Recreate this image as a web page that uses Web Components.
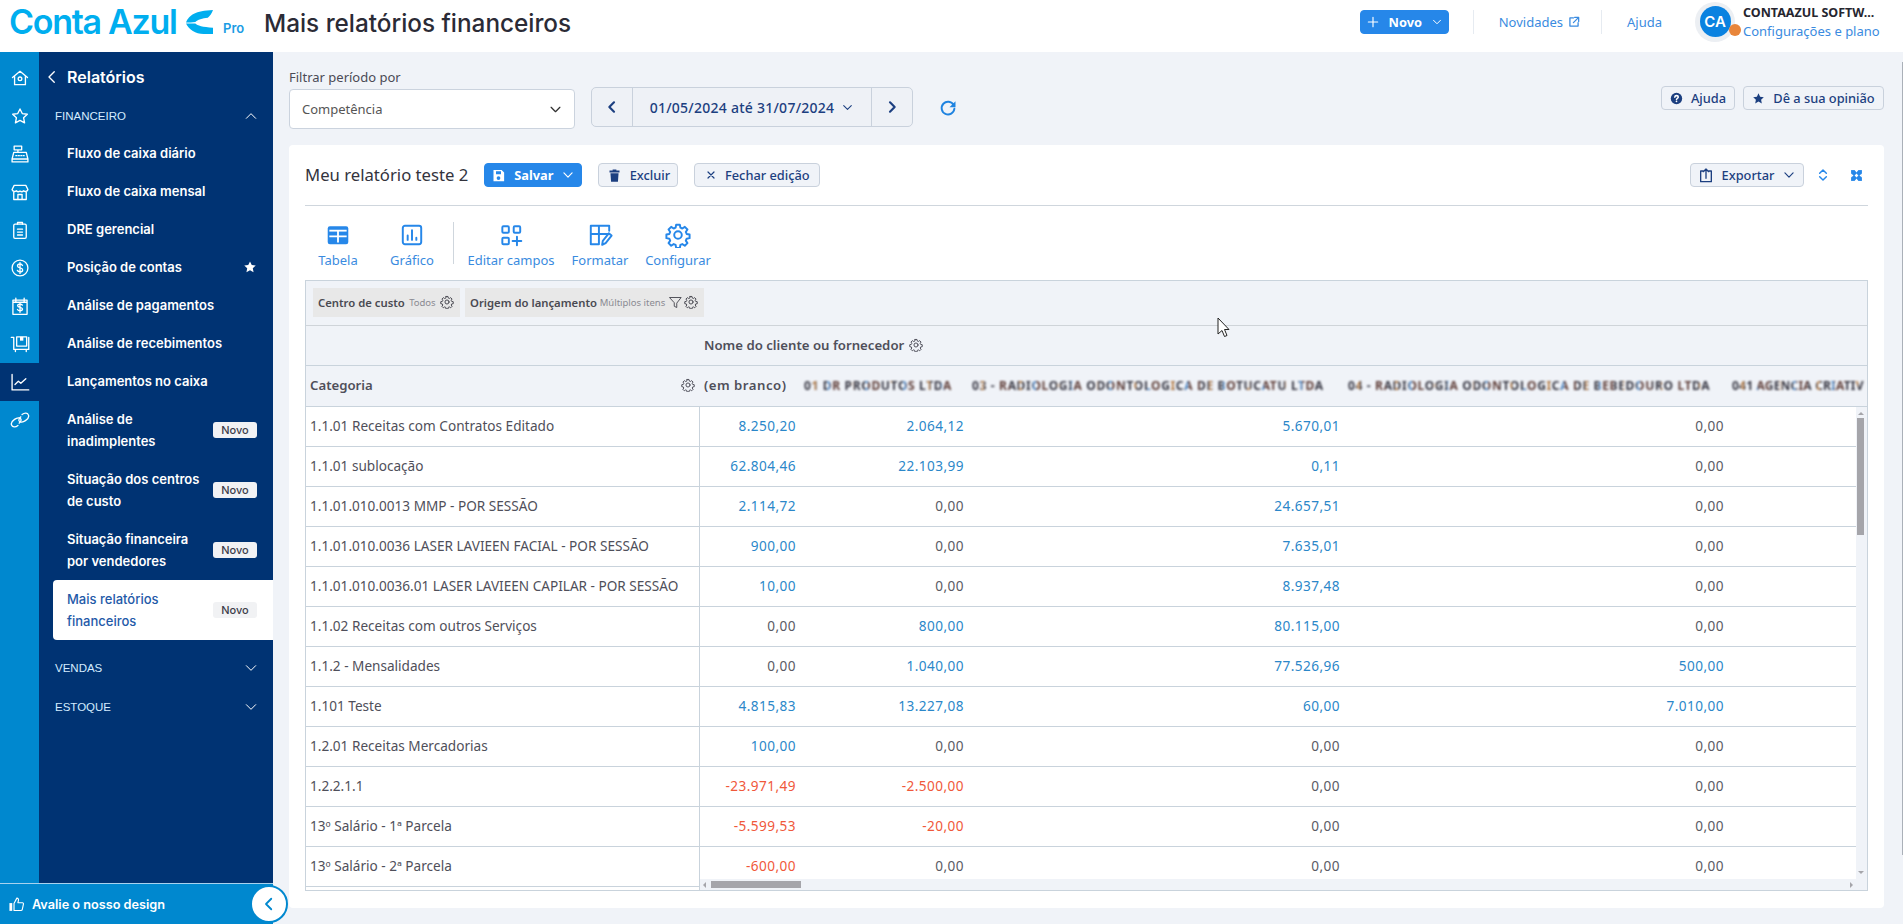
<!DOCTYPE html>
<html lang="pt-BR">
<head>
<meta charset="utf-8">
<title>Mais relatórios financeiros</title>
<style>
    html, body { margin: 0; height: 924px; overflow: hidden; background: #f0f3f8; }
    body { font-family: "Noto Sans", sans-serif; }
</style>
</head>
<body>
<ca-app></ca-app>
<script>
const ICONS = {
    home: '<path d="M3 11.500 12 4l9 7.500M5.500 10v10h13V10"/><circle cx="12" cy="13" r="2.200"/>',
    star: '<path d="m12 3.500 2.700 5.600 6.100.8-4.500 4.200 1.200 6.100-5.500-3-5.500 3 1.200-6.100-4.500-4.200 6.100-.8z"/>',
    register: '<path d="M5 2.500h9v4.500H5zM9.500 7v3M4.500 10h15l2 8h-19zM2.500 18h19v3.500h-19z"/><path d="M7 14h10" stroke-dasharray="1.200 1.800"/>',
    store: '<path d="M5 4h14l2.500 5a3 3 0 0 1-5 1.500A3.500 3.500 0 0 1 12 11a3.500 3.500 0 0 1-4.500-.5A3 3 0 0 1 2.500 9zM4.500 12v9h15v-9M9.500 21v-6h5v6"/>',
    clipboard: '<rect x="4.500" y="5" width="15" height="17" rx="1.500"/><path d="M9 5V3h6v2M9 11h6M9 14.500h6M9 18h6"/>',
    dollar: '<circle cx="12" cy="12" r="9.500"/><path d="M15 9c-.6-1.300-1.700-1.800-3-1.800-1.800 0-3 1-3 2.300 0 3.200 6.200 1.600 6.200 4.800 0 1.400-1.300 2.400-3.200 2.400-1.500 0-2.700-.6-3.200-1.900M12 5.500v13"/>',
    calendar: '<path d="M3.500 5h17v17h-17zM7 2.500V7M17 2.500V7M3.500 7.500h17"/><path d="M14.800 11c-.5-.8-1.500-1.200-2.800-1.200-1.700 0-2.800.8-2.800 1.900 0 2.700 5.800 1.300 5.800 4 0 1.100-1.200 2-3 2-1.400 0-2.500-.5-3-1.500M12 8.500v11"/>',
    box: '<path d="M1.500 4h3v14.500h18V4M8 3.500h12v11H8zM6.500 18.500V21M19.500 18.500V21"/><path fill="currentColor" stroke="none" d="M12 3.500h4v4.500h-4z"/>',
    chart: '<path d="M2.500 3v18.500h20M6 15l4-4 3 2.500 6-5.500"/>',
    link: '<path d="M9.500 18.500c-3 2.500-6.500 2-7.500-.2-1-2 .5-5 3.500-7s6.500-2.500 7.500-.5c.7 1.500-.2 3.500-2 5"/><path d="M14.500 5.500c3-2.500 6.500-2 7.500.2 1 2-.5 5-3.500 7s-6.500 2.500-7.500.5c-.7-1.500.2-3.500 2-5"/>',
    left: '<path d="m15 5-7 7 7 7"/>',
    right: '<path d="m9 5 7 7-7 7"/>',
    up: '<path d="m5 15.500 7-7 7 7"/>',
    down: '<path d="m5 8.500 7 7 7-7"/>',
    plus: '<path d="M12 4v16M4 12h16"/>',
    x: '<path d="m6 6 12 12M18 6 6 18"/>',
    external: '<path d="M11 5H5v14h14v-6M13 4h7v7M20 4l-9 9"/>',
    refresh: '<path d="M19.500 8A8.500 8.500 0 1 0 20.500 13"/><path fill="currentColor" stroke="none" d="M22 3v8h-8z"/>',
    sort: '<path d="m7 9.500 5-5 5 5M7 14.500l5 5 5-5"/>',
    upload: '<path d="M8 6H4v16h16V6h-4M12 17V3M8 7l4-4 4 4"/>',
    thumb: '<path fill="currentColor" stroke="none" d="M2 10h4v11H2z"/><path d="M8.500 10.500 12.500 3c2 .2 2.800 1.700 2.200 3.500L14 9.500h6.500c1 0 1.500 1 1.300 2l-1.600 7.500c-.2 1-1 1.500-2 1.500H8.500z"/>',
    gear: '<path d="M10.300 2.500h3.400l.5 2.700 1.800.8 2.300-1.500 2.400 2.400-1.500 2.300.8 1.800 2.700.5v3.400l-2.700.5-.8 1.800 1.500 2.300-2.400 2.400-2.300-1.500-1.800.8-.5 2.700h-3.400l-.5-2.700-1.800-.8-2.300 1.500-2.400-2.400 1.500-2.300-.8-1.800-2.700-.5v-3.400l2.700-.5.8-1.800-1.500-2.300 2.400-2.400 2.300 1.500 1.800-.8z"/><circle cx="12" cy="12" r="3.500"/>',
    funnel: '<path d="M3 4h18l-7 9v7l-4-2v-5z"/>',
    grid: '<rect x="2.500" y="4" width="19" height="16.500" rx="2" fill="currentColor" stroke="none"/><path stroke="#fff" stroke-width="1.700" stroke-linecap="butt" d="M4 13.300h16M12 8v11"/><path stroke="#fff" stroke-width="1.700" stroke-linecap="butt" d="M4 8h16"/>',
    bars: '<rect x="3.500" y="3.500" width="17" height="17" rx="2"/><path d="M8 16.500v-4M12 16.500V7.500M16 16.500v-2"/>',
    fields: '<rect x="4" y="4" width="6" height="6" rx="1"/><rect x="14.500" y="4" width="6" height="6" rx="1"/><rect x="4" y="14.500" width="6" height="6" rx="1"/><path d="M17.500 13.500v8M13.500 17.500h8"/>',
    format: '<path d="M20.500 8V3.500h-17v17H11M3.500 11h17M11 3.500V20.500"/><path d="m14 21 .6-3.500 5.500-7 2.600 2-5.500 7z"/>',
    star_solid: '<path fill="currentColor" stroke="none" d="m12 2.500 3 6.200 6.800.9-5 4.700 1.300 6.700-6.100-3.300-6.100 3.300 1.300-6.700-5-4.700 6.800-.9z"/>',
    help_solid: '<circle cx="12" cy="12" r="10.500" fill="currentColor" stroke="none"/><path stroke="#fff" stroke-width="2.800" d="M8.800 9.500c.2-1.800 1.500-2.800 3.300-2.800 1.900 0 3.200 1 3.200 2.600 0 2.400-3.300 2.400-3.300 4.700"/><circle cx="12" cy="17.300" r="1.600" fill="#fff" stroke="none"/>',
    trash_solid: '<path fill="currentColor" stroke="none" d="M4 4h5V2.500h6V4h5v3H4zM5.500 8.500h13l-1 13.500h-11z"/>',
    save_solid: '<path fill="currentColor" stroke="none" fill-rule="evenodd" d="M4 3h13l4 4v14H4zM8 5v5h8V5zM12 13a3 3 0 1 0 0 6 3 3 0 0 0 0-6z"/>',
    expand_solid: '<path fill="currentColor" stroke="none" d="M2 2h20v20H2z"/><path fill="#fff" stroke="none" d="M8.500 2h7L12 6.500zM8.500 22h7L12 17.500zM2 8.500v7L6.500 12zM22 8.500v7L17.500 12zM12 8.500 15.500 12 12 15.500 8.500 12z"/>'
};

class CaIcon extends HTMLElement {
    connectedCallback() {
        const size = this.getAttribute('size') || 16;
        const weight = this.getAttribute('weight') || 1.8;
        this.attachShadow({mode: 'open'}).innerHTML = `
        <style>
            :host { display: inline-flex; flex: none; width: ${size}px; height: ${size}px; }
            svg { width: 100%; height: 100%; display: block; fill: none; stroke: currentColor;
                  stroke-width: ${weight}; stroke-linecap: round; stroke-linejoin: round; }
        </style>
        <svg viewBox="0 0 24 24">${ICONS[this.getAttribute('name')] || ''}</svg>`;
    }
}
customElements.define('ca-icon', CaIcon);

class CaButton extends HTMLElement {
    constructor() {
        super();
        this.attachShadow({mode: 'open'}).innerHTML = `
        <style>
            :host { display: inline-flex; align-items: center; justify-content: center; gap: 8px; flex: none;
                    box-sizing: border-box; height: 24px; padding: 0 8px; border-radius: 4px;
                    border: 1px solid #c9d1dc; background: #f0f3f8; color: #1c3f80;
                    font: 500 12.8px "Noto Sans", sans-serif; white-space: nowrap; }
            :host([primary]) { background: #2687e9; border-color: #2687e9; color: #fff; font-weight: 700; }
        </style>
        <slot></slot>`;
    }
}
customElements.define('ca-button', CaButton);

class CaHeader extends HTMLElement {
    constructor() {
        super();
        this.attachShadow({mode: 'open'}).innerHTML = `
        <style>
            :host { display: flex; align-items: center; height: 52px; background: #fff; flex: none; padding: 0 0 9px 9px; box-sizing: border-box; }
            .logo { font: 600 34px/1 Inter, sans-serif; letter-spacing: -1.300px; color: #00aeef; width: 172px; white-space: nowrap; }
            .mark { width: 27px; height: 24px; margin: 0 0 0 5px; flex: none; }
            .pro { font: 600 13px/1 Inter, sans-serif; color: #1b9ce4; align-self: flex-end; margin: 0 0 8px 10px; width: 41px; }
            h1 { margin: 3px 0 0; font: 500 24.300px/1 Inter, sans-serif; color: #2b2b36; white-space: nowrap; }
            .right { margin-left: auto; display: flex; align-items: center; height: 100%; }
            .sep { width: 1px; height: 24px; background: #e6ebf1; }
            .link { display: flex; align-items: center; gap: 4px; font: 400 13px "Noto Sans", sans-serif; color: #3a8be0; }
            .avatar { position: relative; width: 40px; height: 40px; border-radius: 50%; background: #eceff3; display: flex; align-items: center; justify-content: center; }
            .avatar span { width: 31px; height: 31px; border-radius: 50%; background: #0a82e0; color: #fff; display: flex; align-items: center; justify-content: center; font: 600 15px Inter, sans-serif; }
            .avatar i { position: absolute; right: -6px; bottom: 6px; width: 12px; height: 12px; border-radius: 50%; background: #e8853a; }
            .user { margin: 0 19px 0 8px; width: 141px; }
            .user b { display: block; font: 700 12.500px/19px "Noto Sans", sans-serif; color: #26262f; white-space: nowrap; }
            .user small { display: block; font: 400 13px/19px "Noto Sans", sans-serif; color: #3a8be0; white-space: nowrap; }
        </style>
        <div class="logo">Conta Azul</div>
        <svg class="mark" viewBox="0 0 26 23"><path fill="#00aeef" d="M0 12C3 5 9 .5 26 0c-1 3-3 6-5 7.500-5 .5-10 2-12 4-3 .5-6 .5-9 .5zM0 13h9c2 2 7 3.500 17 4v6h-9C9 23 3 19 0 13z"/></svg>
        <div class="pro">Pro</div>
        <h1>Mais relatórios financeiros</h1>
        <div class="right">
            <ca-button primary style="width:89px;gap:9px;">
                <ca-icon name="plus" size="14" weight="2"></ca-icon><span>Novo</span><ca-icon name="down" size="12" weight="2"></ca-icon>
            </ca-button>
            <div class="sep" style="margin-left:24px"></div>
            <div class="link" style="margin-left:25px">Novidades <ca-icon name="external" size="14" weight="2.200"></ca-icon></div>
            <div class="sep" style="margin-left:20px"></div>
            <div class="link" style="margin-left:25px">Ajuda</div>
            <div class="avatar" style="margin-left:33px"><span>CA</span><i></i></div>
            <div class="user"><b>CONTAAZUL SOFTW...</b><small>Configurações e plano</small></div>
        </div>`;
    }
}
customElements.define('ca-header', CaHeader);

class CaRail extends HTMLElement {
    constructor() {
        super();
        const names = ['home', 'star', 'register', 'store', 'clipboard', 'dollar', 'calendar', 'box', 'chart', 'link'];
        this.attachShadow({mode: 'open'}).innerHTML = `
        <style>
            :host { display: flex; flex-direction: column; width: 39px; flex: none; background: #0088cf; color: #fff; padding-top: 7px; box-sizing: border-box; }
            div { height: 38px; display: flex; align-items: center; justify-content: center; }
            .on { background: #003373; }
        </style>
        ${names.map(n => `<div class="${n === 'chart' ? 'on' : ''}"><ca-icon name="${n}" size="20" weight="1.600"></ca-icon></div>`).join('')}`;
    }
}
customElements.define('ca-rail', CaRail);

class CaNavItem extends HTMLElement {
    constructor() {
        super();
        this.attachShadow({mode: 'open'}).innerHTML = `
        <style>
            :host { display: flex; align-items: center; box-sizing: border-box; min-height: 38px; padding: 0 16px 0 14px; color: #fff;
                    font: 600 13px/22px Inter, sans-serif; border-radius: 4px 0 0 4px; }
            :host([two]) { height: 60px; }
            :host([active]) { background: #fff; color: #1f5aa8; font-weight: 500; }
            .label { flex: 1; }
            .badge { width: 44px; height: 16px; border-radius: 3px; background: #f1f2f4; color: #3d3d4a;
                     font: 500 11px/16px Inter, sans-serif; text-align: center; }
            :host(:not([badge])) .badge { display: none; }
        </style>
        <div class="label"><slot></slot></div>
        <slot name="end"></slot>
        <div class="badge">Novo</div>`;
    }
}
customElements.define('ca-nav-item', CaNavItem);

class CaNavSection extends HTMLElement {
    constructor() {
        super();
        const open = this.hasAttribute('open');
        this.attachShadow({mode: 'open'}).innerHTML = `
        <style>
            :host { display: flex; align-items: center; justify-content: space-between; box-sizing: border-box; height: 38px;
                    padding: 0 14px 0 2px; color: #d4ecff; font: 400 11.500px "Liberation Sans", sans-serif; }
            :host([open]) { height: 28px; margin-bottom: 4px; }
            ca-icon { color: #fff; }
        </style>
        <slot></slot>
        <ca-icon name="${open ? 'up' : 'down'}" size="16" weight="1.500"></ca-icon>`;
    }
}
customElements.define('ca-nav-section', CaNavSection);

class CaPanel extends HTMLElement {
    constructor() {
        super();
        this.attachShadow({mode: 'open'}).innerHTML = `
        <style>
            :host { display: flex; flex-direction: column; width: 234px; flex: none; background: #003373; padding-left: 14px; box-sizing: border-box; }
            .title { display: flex; align-items: center; height: 50px; gap: 6px; color: #fff; font: 600 16px Inter, sans-serif; margin-left: -10px; }
            .list { display: flex; flex-direction: column; }
        </style>
        <div class="title"><ca-icon name="left" size="18" weight="1.800"></ca-icon><span>Relatórios</span></div>
        <div class="list"><slot></slot></div>`;
    }
}
customElements.define('ca-panel', CaPanel);

class CaFeedback extends HTMLElement {
    constructor() {
        super();
        this.attachShadow({mode: 'open'}).innerHTML = `
        <style>
            :host { display: flex; position: relative; align-items: center; gap: 7px; height: 41px; box-sizing: border-box; flex: none;
                    padding-left: 8px; background: #0088cf; border-top: 1px solid #a8d2ee; color: #fff;
                    font: 600 12.700px Inter, sans-serif; }
            .toggle { position: absolute; left: 250px; top: 1px; width: 38px; height: 38px; box-sizing: border-box; border-radius: 50%;
                      background: #fff; border: 2px solid #0088cf; color: #0088cf; display: flex; align-items: center; justify-content: center; }
        </style>
        <ca-icon name="thumb" size="17" weight="1.600"></ca-icon><span>Avalie o nosso design</span>
        <div class="toggle"><ca-icon name="left" size="18" weight="2.400"></ca-icon></div>`;
    }
}
customElements.define('ca-feedback', CaFeedback);

class CaFilterBar extends HTMLElement {
    constructor() {
        super();
        this.attachShadow({mode: 'open'}).innerHTML = `
        <style>
            :host { display: flex; align-items: flex-end; flex: none; font-family: "Noto Sans", sans-serif; }
            label { display: block; font-size: 13px; line-height: 16px; margin-bottom: 4px; color: #4a4a55; }
            .select { display: flex; align-items: center; justify-content: space-between; box-sizing: border-box; width: 286px; height: 40px;
                      padding: 0 11px 0 12px; background: #fff; border: 1px solid #cbd3de; border-radius: 4px; color: #555; font-size: 13px; }
            .select ca-icon { color: #333; }
            .range { display: flex; height: 40px; box-sizing: border-box; margin: 0 0 2px 16px; width: 322px; background: #eef1f6;
                     border: 1px solid #c9d1dc; border-radius: 5px; color: #1c3f80; font-size: 14px; letter-spacing: .25px; font-weight: 500; }
            .range > div { display: flex; align-items: center; justify-content: center; gap: 7px; }
            .nav { width: 40px; flex: none; }
            .dates { flex: 1; border: solid #c9d1dc; border-width: 0 1px; white-space: nowrap; }
            .reload { color: #1f83e0; margin: 0 0 7px 26px; }
            .side { margin-left: auto; align-self: flex-start; margin-top: 17px; display: flex; gap: 8px; }
        </style>
        <div><label>Filtrar período por</label>
            <div class="select">Competência <ca-icon name="down" size="15" weight="2"></ca-icon></div></div>
        <div class="range">
            <div class="nav"><ca-icon name="left" size="16" weight="3.200"></ca-icon></div>
            <div class="dates">01/05/2024 até 31/07/2024 <ca-icon name="down" size="13" weight="2"></ca-icon></div>
            <div class="nav"><ca-icon name="right" size="16" weight="3.200"></ca-icon></div>
        </div>
        <div class="reload"><ca-icon name="refresh" size="18" weight="2.600"></ca-icon></div>
        <div class="side">
            <ca-button style="width:74px"><ca-icon name="help_solid" size="13"></ca-icon>Ajuda</ca-button>
            <ca-button style="width:141px"><ca-icon name="star_solid" size="13"></ca-icon>Dê a sua opinião</ca-button>
        </div>`;
    }
}
customElements.define('ca-filter-bar', CaFilterBar);

class CaToolButton extends HTMLElement {
    constructor() {
        super();
        const icon = this.getAttribute('icon');
        this.attachShadow({mode: 'open'}).innerHTML = `
        <style>
            :host { display: flex; flex-direction: column; align-items: center; flex: none; color: #3a8be0; font: 400 13px/16px "Noto Sans", sans-serif; white-space: nowrap; }
            ca-icon { color: #2687e9; margin-bottom: 4px; }
        </style>
        <ca-icon name="${icon}" size="26" weight="1.800"></ca-icon>
        <slot></slot>`;
    }
}
customElements.define('ca-tool-button', CaToolButton);

const ROWS = [
    ['1.1.01 Receitas com Contratos Editado', '8.250,20', '2.064,12', '5.670,01', '0,00'],
    ['1.1.01 sublocação', '62.804,46', '22.103,99', '0,11', '0,00'],
    ['1.1.01.010.0013 MMP - POR SESSÃO', '2.114,72', '0,00', '24.657,51', '0,00'],
    ['1.1.01.010.0036 LASER LAVIEEN FACIAL - POR SESSÃO', '900,00', '0,00', '7.635,01', '0,00'],
    ['1.1.01.010.0036.01 LASER LAVIEEN CAPILAR - POR SESSÃO', '10,00', '0,00', '8.937,48', '0,00'],
    ['1.1.02 Receitas com outros Serviços', '0,00', '800,00', '80.115,00', '0,00'],
    ['1.1.2 - Mensalidades', '0,00', '1.040,00', '77.526,96', '500,00'],
    ['1.101 Teste', '4.815,83', '13.227,08', '60,00', '7.010,00'],
    ['1.2.01 Receitas Mercadorias', '100,00', '0,00', '0,00', '0,00'],
    ['1.2.2.1.1', '-23.971,49', '-2.500,00', '0,00', '0,00'],
    ['13º Salário - 1ª Parcela', '-5.599,53', '-20,00', '0,00', '0,00'],
    ['13º Salário - 2ª Parcela', '-600,00', '0,00', '0,00', '0,00']
];

class CaReportTable extends HTMLElement {
    constructor() {
        super();
        const tone = v => v === '0,00' ? 'zero' : v[0] === '-' ? 'neg' : 'pos';
        this.attachShadow({mode: 'open'}).innerHTML = `
        <style>
            :host { display: flex; flex-direction: column; box-sizing: border-box; height: 611px; border: 1px solid #c9d3dc; background: #f0f3f8;
                    font: 400 13.600px "Noto Sans", sans-serif; color: #4f4f5a; overflow: hidden; }
            .filters { display: flex; align-items: center; gap: 5px; height: 45px; flex: none; box-sizing: border-box; padding: 0 0 2px 7px; border-bottom: 1px solid #cfd4d9; }
            .chip { display: flex; align-items: center; justify-content: space-between; height: 29px; padding: 0 6px 0 5px; background: #e8e8e8; font-size: 11.300px; font-weight: 600; color: #4a4a52; white-space: nowrap; box-sizing: border-box; }
            .chip small { font-size: 9.500px; font-weight: 400; color: #8a8a92; }
            .pivot { display: flex; align-items: center; height: 40px; flex: none; box-sizing: border-box; padding: 0 0 2px 398px; gap: 5px; border-bottom: 1px solid #c9d3dc; font-size: 13.200px; font-weight: 600; }
            .heads { display: grid; grid-template-columns: 393px 102px 168px 376px 384px 1fr; height: 41px; flex: none; box-sizing: border-box; padding-bottom: 2px; border-bottom: 1px solid #c9d3dc; font-size: 13.200px; font-weight: 600; white-space: nowrap; }
            .heads > div { display: flex; align-items: center; overflow: hidden; }
            .heads .cat { justify-content: space-between; padding: 0 4px; }
            .heads .col { padding-left: 5px; letter-spacing: .5px; }
            .heads .blur { padding-left: 3px; font-size: 12px; font-weight: 700; letter-spacing: .66px; filter: blur(.85px); }
            .blur span { color: transparent; -webkit-background-clip: text; background-clip: text;
                         background-image: repeating-linear-gradient(90deg, #33333f 0 9px, #b5793f 9px 12px, #33333f 12px 23px, #4d86c4 23px 26px, #5c3a34 26px 38px); }
            .body { display: flex; flex: 1; min-height: 0; }
            .frozen { width: 394px; flex: none; box-sizing: border-box; border-right: 1px solid #c9d3dc; background: #fff; overflow: hidden; }
            .pane { flex: 1; display: flex; flex-direction: column; min-width: 0; }
            .view { flex: 1; overflow: hidden; background: #fff; min-height: 0; }
            .row { height: 40px; box-sizing: border-box; padding-bottom: 2px; border-bottom: 1px solid #c9d3dc; display: grid; align-items: center; white-space: nowrap; }
            .frozen .row { padding-left: 4px; }
            .view .row { grid-template-columns: 101px 168px 376px 384px 1fr; text-align: right; letter-spacing: .45px; }
            .view .row span { padding-right: 5px; }
            .pos { color: #2b87c9; } .neg { color: #f0583a; } .zero { color: #5a5a64; }
            .hbar { height: 11px; flex: none; display: flex; align-items: center; justify-content: space-between; padding: 0 3px 0 3px; }
            .hbar i { display: block; margin: 0 auto 0 5px; width: 90px; height: 7px; background: #a5a5aa; }
            .hbar b, .vbar b { display: block; width: 0; height: 0; border: 3px solid transparent; flex: none; }
            .hbar .l { border-right-color: #a5a5aa; border-left-width: 0; }
            .hbar .r { border-left-color: #a5a5aa; border-right-width: 0; }
            .vbar { width: 11px; flex: none; display: flex; flex-direction: column; align-items: center; padding: 5px 2px 16px 0; box-sizing: border-box; }
            .vbar i { display: block; width: 7px; height: 117px; background: #a5a5aa; margin: 3px 0 auto; }
            .vbar .u { border-bottom-color: #a5a5aa; border-top-width: 0; }
            .vbar .d { border-top-color: #a5a5aa; border-bottom-width: 0; }
        </style>
        <div class="filters">
            <div class="chip" style="width:147px">Centro de custo <small>Todos</small> <ca-icon name="gear" size="14" weight="1.700"></ca-icon></div>
            <div class="chip" style="width:239px">Origem do lançamento <small>Múltiplos itens</small> <span style="display:flex;gap:1px"><ca-icon name="funnel" size="15" weight="1.500"></ca-icon><ca-icon name="gear" size="14" weight="1.700"></ca-icon></span></div>
        </div>
        <div class="pivot">Nome do cliente ou fornecedor <ca-icon name="gear" size="14" weight="1.700"></ca-icon></div>
        <div class="heads">
            <div class="cat">Categoria <ca-icon name="gear" size="14" weight="1.700"></ca-icon></div>
            <div class="col">(em branco)</div>
            <div class="blur"><span>01 DR PRODUTOS LTDA</span></div>
            <div class="blur"><span>03 - RADIOLOGIA ODONTOLOGICA DE BOTUCATU LTDA</span></div>
            <div class="blur"><span>04 - RADIOLOGIA ODONTOLOGICA DE BEBEDOURO LTDA</span></div>
            <div class="blur" style="letter-spacing:.2px"><span>041 AGENCIA CRIATIV</span></div>
        </div>
        <div class="body">
            <div class="frozen">${ROWS.map(r => `<div class="row">${r[0]}</div>`).join('')}</div>
            <div class="pane">
                <div class="view">${ROWS.map(r => `<div class="row">${r.slice(1).map(v => `<span class="${tone(v)}">${v}</span>`).join('')}<span></span></div>`).join('')}</div>
                <div class="hbar"><b class="l"></b><i></i><b class="r"></b></div>
            </div>
            <div class="vbar"><b class="u"></b><i></i><b class="d"></b></div>
        </div>`;
    }
}
customElements.define('ca-report-table', CaReportTable);

class CaReportCard extends HTMLElement {
    constructor() {
        super();
        this.attachShadow({mode: 'open'}).innerHTML = `
        <style>
            :host { display: flex; flex-direction: column; flex: 1; min-height: 0; background: #fff; border-radius: 4px; padding: 0 16px 17px; box-sizing: border-box; }
            .head { display: flex; align-items: center; height: 61px; flex: none; box-sizing: border-box; border-bottom: 1px solid #cfd6dd; gap: 16px; }
            h2 { margin: 0 0 2px; font: 400 16.700px "Noto Sans", sans-serif; color: #33333d; }
            .end { margin-left: auto; display: flex; align-items: center; color: #2687e9; padding-right: 5px; }
            .tools { display: flex; height: 74px; flex: none; box-sizing: border-box; padding-top: 16px; }
            .bar { width: 1px; height: 42px; background: #cfd6dd; flex: none; }
        </style>
        <div class="head">
            <h2>Meu relatório teste 2</h2>
            <ca-button primary style="width:98px"><ca-icon name="save_solid" size="15"></ca-icon>Salvar<ca-icon name="down" size="14" weight="2"></ca-icon></ca-button>
            <ca-button style="width:80px"><ca-icon name="trash_solid" size="15"></ca-icon>Excluir</ca-button>
            <ca-button style="width:126px"><ca-icon name="x" size="12" weight="2.400"></ca-icon>Fechar edição</ca-button>
            <div class="end">
                <ca-button style="width:114px"><ca-icon name="upload" size="16" weight="2"></ca-icon>Exportar<ca-icon name="down" size="14" weight="2"></ca-icon></ca-button>
                <ca-icon name="sort" size="16" weight="2.200" style="margin-left:11px"></ca-icon>
                <ca-icon name="expand_solid" size="13" style="margin-left:19px"></ca-icon>
            </div>
        </div>
        <div class="tools">
            <ca-tool-button icon="grid" style="width:66px">Tabela</ca-tool-button>
            <ca-tool-button icon="bars" style="width:82px">Gráfico</ca-tool-button>
            <div class="bar"></div>
            <ca-tool-button icon="fields" style="width:114px">Editar campos</ca-tool-button>
            <ca-tool-button icon="format" style="width:64px">Formatar</ca-tool-button>
            <ca-tool-button icon="gear" style="width:92px">Configurar</ca-tool-button>
        </div>
        <ca-report-table></ca-report-table>`;
    }
}
customElements.define('ca-report-card', CaReportCard);

class CaApp extends HTMLElement {
    constructor() {
        super();
        this.attachShadow({mode: 'open'}).innerHTML = `
        <style>
            :host { display: flex; flex-direction: column; height: 924px; position: relative; overflow: hidden; }
            .shell { display: flex; flex: 1; min-height: 0; }
            .left { width: 273px; flex: none; display: flex; flex-direction: column; position: relative; z-index: 1; }
            .nav { display: flex; flex: 1; min-height: 0; }
            main { flex: 1; min-width: 0; display: flex; flex-direction: column; gap: 16px; padding: 17px 19px 16px 16px; box-sizing: border-box; }
            .page-scroll { position: absolute; right: 0; top: 62px; width: 1px; height: 793px; background: #aab0b8; }
            .cursor { position: absolute; left: 1217px; top: 317px; width: 14px; height: 21px; }
        </style>
        <ca-header></ca-header>
        <div class="shell">
            <div class="left">
                <div class="nav">
                    <ca-rail></ca-rail>
                    <ca-panel>
                        <ca-nav-section open>FINANCEIRO</ca-nav-section>
                        <ca-nav-item>Fluxo de caixa diário</ca-nav-item>
                        <ca-nav-item>Fluxo de caixa mensal</ca-nav-item>
                        <ca-nav-item>DRE gerencial</ca-nav-item>
                        <ca-nav-item>Posição de contas<ca-icon slot="end" name="star_solid" size="14"></ca-icon></ca-nav-item>
                        <ca-nav-item>Análise de pagamentos</ca-nav-item>
                        <ca-nav-item>Análise de recebimentos</ca-nav-item>
                        <ca-nav-item>Lançamentos no caixa</ca-nav-item>
                        <ca-nav-item two badge>Análise de<br>inadimplentes</ca-nav-item>
                        <ca-nav-item two badge>Situação dos centros<br>de custo</ca-nav-item>
                        <ca-nav-item two badge>Situação financeira<br>por vendedores</ca-nav-item>
                        <ca-nav-item two badge active>Mais relatórios<br>financeiros</ca-nav-item>
                        <ca-nav-section style="margin-top:9px">VENDAS</ca-nav-section>
                        <ca-nav-section style="margin-top:1px">ESTOQUE</ca-nav-section>
                    </ca-panel>
                </div>
                <ca-feedback></ca-feedback>
            </div>
            <main>
                <ca-filter-bar></ca-filter-bar>
                <ca-report-card></ca-report-card>
            </main>
        </div>
        <div class="page-scroll"></div>
        <svg class="cursor" viewBox="0 0 14 21"><path d="M1 1v16l4-3.500 2.500 6 2.500-1-2.500-6H12z" fill="#fff" stroke="#222" stroke-width="1"/></svg>`;
    }
}
customElements.define('ca-app', CaApp);
</script>
</body>
</html>
